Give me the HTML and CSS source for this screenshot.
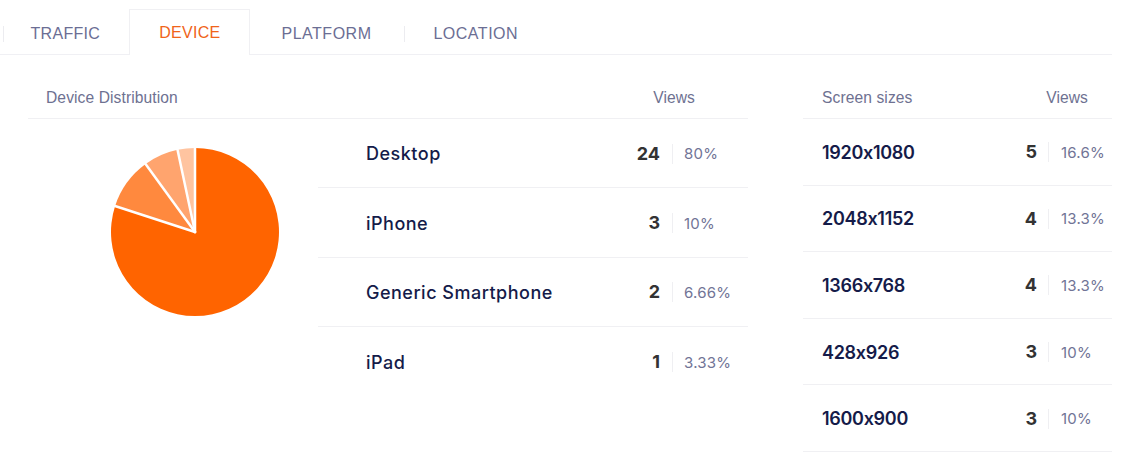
FILE: index.html
```html
<!DOCTYPE html>
<html lang="en">
<head>
<meta charset="utf-8">
<title>Device analytics</title>
<link rel="stylesheet" href="styles.css">
</head>
<body>
<nav class="tabs">
  <a class="tab sep">TRAFFIC</a>
  <a class="tab active">DEVICE</a>
  <a class="tab">PLATFORM</a>
  <a class="tab sep">LOCATION</a>
</nav>
<main class="content">
  <section class="card devices">
    <div class="card-head">
      <span class="head-title">Device Distribution</span>
      <span class="head-views">Views</span>
    </div>
    <div class="card-body">
      <div class="pie-col">
        <svg class="pie" width="170" height="170" viewBox="-85 -85 170 170">
          <path d="M0,0 L0,-84 A84,84 0 1 1 -79.89,-25.96 Z" fill="#ff6400"/>
          <path d="M0,0 L-79.89,-25.96 A84,84 0 0 1 -49.37,-67.96 Z" fill="#ff893e"/>
          <path d="M0,0 L-49.37,-67.96 A84,84 0 0 1 -17.46,-82.16 Z" fill="#ffa46e"/>
          <path d="M0,0 L-17.46,-82.16 A84,84 0 0 1 0,-84 Z" fill="#ffc4a0"/>
          <g stroke="#fff" stroke-width="2.5" stroke-linecap="round">
            <line x1="0" y1="0" x2="0" y2="-85"/>
            <line x1="0" y1="0" x2="-80.8" y2="-26.3"/>
            <line x1="0" y1="0" x2="-50" y2="-68.8"/>
            <line x1="0" y1="0" x2="-17.7" y2="-83.2"/>
          </g>
        </svg>
      </div>
      <div class="rows dev-rows">
        <div class="row"><span class="name">Desktop</span><span class="count">24</span><span class="pct">80%</span></div>
        <div class="row"><span class="name">iPhone</span><span class="count">3</span><span class="pct">10%</span></div>
        <div class="row"><span class="name">Generic Smartphone</span><span class="count">2</span><span class="pct">6.66%</span></div>
        <div class="row last"><span class="name">iPad</span><span class="count">1</span><span class="pct">3.33%</span></div>
      </div>
    </div>
  </section>
  <section class="card screens">
    <div class="card-head">
      <span class="head-title">Screen sizes</span>
      <span class="head-views">Views</span>
    </div>
    <div class="rows scr-rows">
      <div class="row"><span class="name">1920x1080</span><span class="count">5</span><span class="pct">16.6%</span></div>
      <div class="row"><span class="name">2048x1152</span><span class="count">4</span><span class="pct">13.3%</span></div>
      <div class="row"><span class="name">1366x768</span><span class="count">4</span><span class="pct">13.3%</span></div>
      <div class="row"><span class="name">428x926</span><span class="count">3</span><span class="pct">10%</span></div>
      <div class="row"><span class="name">1600x900</span><span class="count">3</span><span class="pct">10%</span></div>
    </div>
  </section>
</main>
</body>
</html>
```
FILE: styles.css
```css
* { box-sizing: border-box; }
html, body { margin: 0; padding: 0; background: #fff; }
body {
  font-family: "Liberation Sans", Arial, sans-serif;
  color: #151b49;
  width: 1138px;
  height: 452px;
  overflow: hidden;
}

/* Tabs */
.tabs {
  display: flex;
  align-items: flex-end;
  height: 55px;
  padding-left: 3px;
  border-bottom: 1px solid #f0f0f4;
  width: 1112px;
}
.tab {
  position: relative;
  display: flex;
  align-items: center;
  justify-content: center;
  height: 45px;
  padding: 1px 28px 0 26.5px;
  font-size: 16px;
  letter-spacing: 0.3px;
  color: #6b6e94;
  border: 1px solid transparent;
  border-bottom: 0;
  margin-bottom: -1px;
  cursor: pointer;
}
.tab.sep::before {
  content: "";
  position: absolute;
  left: -1px;
  top: 15px;
  height: 16px;
  width: 1px;
  background: #ececf0;
}
.tab.active {
  color: #f0641a;
  background: #fff;
  border-color: #f0f0f3;
  height: 46px;
  padding: 1px 28.5px 0 29px;
}
.tab:nth-child(3) { padding: 1px 32px 0 30.5px; letter-spacing: 0.5px; }
.tab:nth-child(4) { padding: 1px 28px 0; letter-spacing: 0.5px; }

/* Content */
.content {
  display: flex;
  padding: 21px 0 0 28px;
  gap: 55px;
}
.card-head {
  display: flex;
  align-items: center;
  justify-content: space-between;
  height: 43px;
  border-bottom: 1px solid #f0f0f3;
  font-size: 15.6px;
  letter-spacing: 0.1px;
  color: #6e7191;
}
.devices { width: 720px; }
.devices .card-head { padding: 2px 53px 0 18px; }
.screens { width: 309px; }
.screens .card-head { padding: 2px 24px 0 19px; }

.card-body { display: flex; }
.pie-col {
  width: 290px;
  padding: 28px 0 0 82px;
}
.pie { display: block; }

.rows { display: flex; flex-direction: column; }
.dev-rows { width: 430px; }
.scr-rows { width: 309px; }

.row {
  display: flex;
  align-items: center;
  padding-top: 1px;
  border-bottom: 1px solid #f0f0f3;
}
.dev-rows .row { height: 69.4px; }
.dev-rows .row.last { border-bottom: 0; }
.scr-rows .row { height: 66.6px; }

.name, .count, .pct {
  font-family: "Inter", "Liberation Sans", sans-serif;
  font-feature-settings: "calt" 0;
}
.name {
  flex: 1;
  font-weight: 500;
  font-size: 18px;
  letter-spacing: 0.5px;
  color: #151b49;
}
.dev-rows .name { padding-left: 48px; }
.scr-rows .name { padding-left: 19px; font-weight: 600; letter-spacing: -0.3px; }

.count {
  font-weight: 700;
  font-size: 18px;
  color: #333;
  text-align: right;
  padding-right: 12px;
  border-right: 1px solid #efeff2;
  line-height: 20px;
}
.pct {
  font-size: 15px;
  letter-spacing: 0.2px;
  color: #717496;
}
.dev-rows .pct { width: 75px; padding-left: 11px; }
.scr-rows .pct { width: 63px; padding-left: 12px; }
.scr-rows .count { padding-right: 11px; }
```
